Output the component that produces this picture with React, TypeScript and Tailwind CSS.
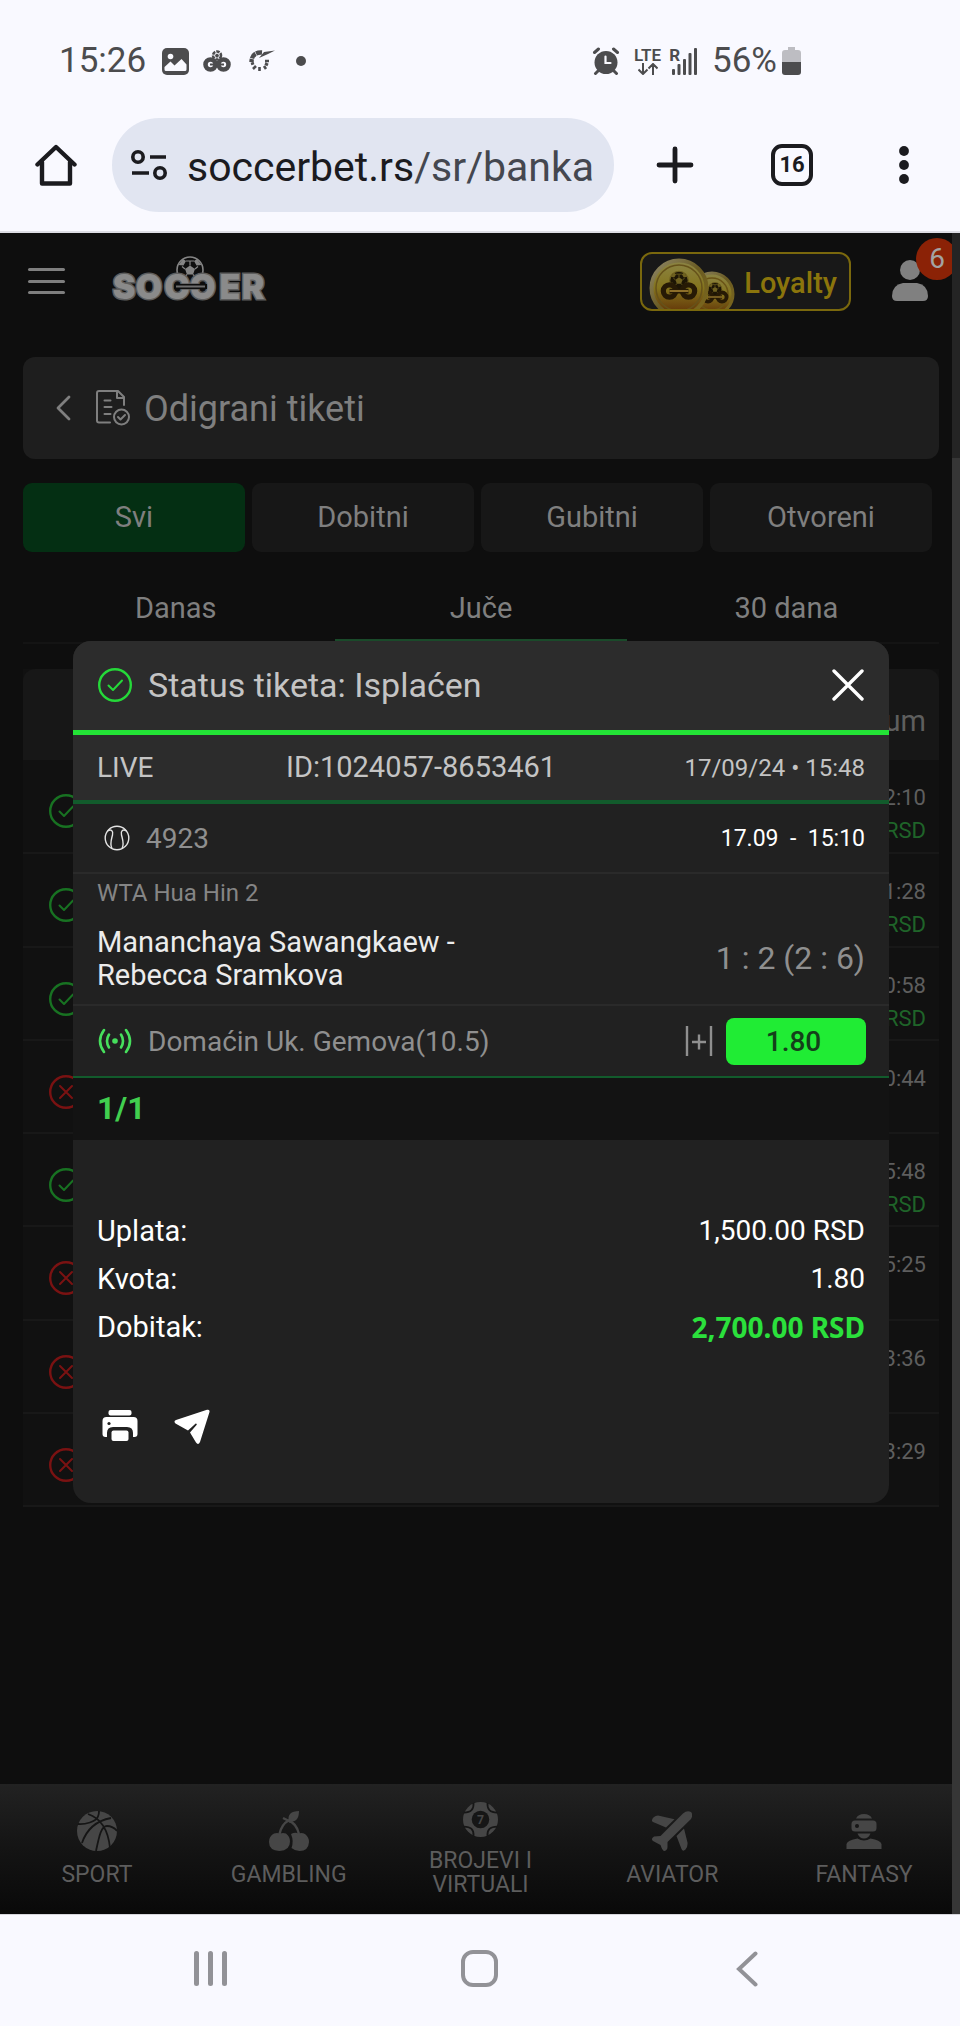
import { useState } from 'react'

type Ticket = { time: string; won: boolean }

const tickets: Ticket[] = [
  { time: '22:10', won: true },
  { time: '21:28', won: true },
  { time: '20:58', won: true },
  { time: '20:44', won: false },
  { time: '15:48', won: true },
  { time: '15:25', won: false },
  { time: '13:36', won: false },
  { time: '13:29', won: false },
]

const filters = ['Svi', 'Dobitni', 'Gubitni', 'Otvoreni']
const periods = ['Danas', 'Juče', '30 dana']

function CheckCircle({ className }: { className: string }) {
  return (
    <svg viewBox="0 0 34 34" className={className} fill="none" stroke="currentColor" strokeWidth="2.4" strokeLinecap="round" strokeLinejoin="round">
      <circle cx="17" cy="17" r="15.8" />
      <path d="M10.5 17.5l4.5 4.5 9-9.5" strokeWidth="2" />
    </svg>
  )
}

function CrossCircle({ className }: { className: string }) {
  return (
    <svg viewBox="0 0 34 34" className={className} fill="none" stroke="currentColor" strokeWidth="2.4" strokeLinecap="round">
      <circle cx="17" cy="17" r="15.8" />
      <path d="M11 11l12 12M23 11L11 23" strokeWidth="2" />
    </svg>
  )
}

// two rings with a ball on top, the brand sign
function BrandMark({ className }: { className?: string }) {
  return (
    <svg viewBox="0 0 28 22" className={className} fill="none" stroke="currentColor">
      <circle cx="7.5" cy="14.5" r="5" strokeWidth="4.6" />
      <circle cx="20.5" cy="14.5" r="5" strokeWidth="4.6" />
      <path d="M7 14.5h14" strokeWidth="2" />
      <circle cx="14" cy="5.5" r="4" strokeWidth="2.6" strokeDasharray="3.4 1" />
      <path d="M12 5l2-1.5L16 5l-.8 2.4h-2.4z" fill="currentColor" stroke="none" />
    </svg>
  )
}

function StatusBar() {
  return (
    <div className="flex h-[98px] items-center justify-between pl-[59px] pr-[159px] pt-6 text-[#4c4c4e]">
      <div className="flex items-center">
        <span className="text-[35px] leading-9">15:26</span>
        <svg viewBox="0 0 27 27" className="ml-4 h-[27px] w-[27px]">
          <rect width="27" height="27" rx="5" fill="currentColor" />
          <circle cx="8.5" cy="8.5" r="2.8" fill="#f9f9ff" />
          <path d="M2.5 19l6-5.5 4 4 7-6.5 5 5.5v5q0 1.5-1.5 1.5h-19q-1.5 0-1.5-1.5z" fill="#f9f9ff" />
        </svg>
        <BrandMark className="ml-[14px] h-[22px] w-7" />
        <svg viewBox="0 0 26 22" className="ml-[18px] h-[22px] w-[26px]" fill="none" stroke="currentColor">
          <path d="M13 2.5C6 2 2.500 6 2.500 12" strokeWidth="4.4" strokeDasharray="6 .6" />
          <path d="M10 8L15 2 26 .5 19 4z" fill="currentColor" stroke="none" />
          <path d="M2 14l3-1M4 19l3-3M10.500 21v-4M17 19l-2-3M20 11h-4M19 15l-3-1.5" strokeWidth="2.6" />
        </svg>
        <span className="ml-[21px] h-[10px] w-[10px] rounded-full bg-[#4c4c4e]" />
      </div>
      <div className="flex items-center">
        <svg viewBox="0 0 28 28" className="h-7 w-7" fill="none" stroke="currentColor" strokeLinecap="round">
          <circle cx="14" cy="15.5" r="11.5" fill="currentColor" stroke="none" />
          <path d="M2.5 5.5l4-3.500M25.500 5.500l-4-3.500M6 24l-2.500 2.500M22 24l2.500 2.500" strokeWidth="3" />
          <path d="M13.5 9.500v6.500h5" stroke="#f9f9ff" strokeWidth="2.2" />
        </svg>
        <div className="ml-[14px] flex flex-col items-center">
          <span className="text-[17px] leading-4 font-semibold">LTE</span>
          <svg viewBox="0 0 20 12" className="h-3 w-5" fill="none" stroke="currentColor" strokeWidth="2">
            <path d="M5 0v10.500M.5 6.500L5 11l4.500-4.500M15 12V1.500M10.500 5.500L15 1l4.500 4.500" />
          </svg>
        </div>
        <div className="ml-2 flex">
          <span className="-mr-2 text-[17px] leading-4 font-bold">R</span>
          <svg viewBox="0 0 25 28" className="h-7 w-[25px]" fill="currentColor">
            <rect x="0" y="22" width="3" height="6" rx="1" />
            <rect x="5.5" y="17" width="3" height="11" rx="1" />
            <rect x="11" y="12" width="3" height="16" rx="1" />
            <rect x="16.5" y="6" width="3" height="22" rx="1" />
            <rect x="22" y="1" width="3" height="27" rx="1" />
          </svg>
        </div>
        <span className="ml-[15px] text-[35px] leading-9">56%</span>
        <svg viewBox="0 0 19 28" className="ml-[5px] h-7 w-[19px]">
          <path d="M6 0h7v3h3q3 0 3 3v9H0V6q0-3 3-3h3z" fill="#bdbdc2" />
          <path d="M0 15h19v10q0 3-3 3H3q-3 0-3-3z" fill="currentColor" />
        </svg>
      </div>
    </div>
  )
}

function BrowserBar() {
  return (
    <div className="flex h-[135px] items-center border-b-2 border-[#dddde4] pl-[35px] pr-[51px] text-[#1b1b1f]">
      <button aria-label="Home">
        <svg viewBox="0 0 42 42" className="h-[42px] w-[42px]" fill="none" stroke="currentColor" strokeWidth="4.4" strokeLinecap="round" strokeLinejoin="round">
          <path d="M2.5 20.5L21 3l18.500 17.500" />
          <path d="M7 18v21.500h28V18" />
        </svg>
      </button>
      <div className="ml-[35px] flex h-[94px] flex-1 items-center rounded-full bg-[#e1e5f1] pl-[19px]">
        <svg viewBox="0 0 36 30" className="h-[30px] w-9" fill="none" stroke="currentColor" strokeWidth="3.6">
          <circle cx="7" cy="7" r="5.2" />
          <circle cx="29" cy="23" r="5.2" />
          <path d="M19 7h16M1 23h17" />
        </svg>
        <span className="ml-5 pt-1 text-[41px] leading-[48px] whitespace-nowrap">
          soccerbet.rs<span className="text-[#44474f]">/sr/banka</span>
        </span>
      </div>
      <button aria-label="New tab" className="ml-[42px]">
        <svg viewBox="0 0 38 38" className="h-[38px] w-[38px]" stroke="currentColor" strokeWidth="4.8" strokeLinecap="round">
          <path d="M19 3v32M3 19h32" />
        </svg>
      </button>
      <button className="ml-[77px] flex h-[42px] w-[42px] items-center justify-center rounded-[11px] border-4 border-[#1b1b1f] text-[22px] leading-6 font-bold">16</button>
      <button aria-label="Menu" className="ml-[86px]">
        <svg viewBox="0 0 10 38" className="h-[38px] w-[10px]" fill="currentColor">
          <circle cx="5" cy="5" r="4.9" />
          <circle cx="5" cy="19" r="4.9" />
          <circle cx="5" cy="33" r="4.9" />
        </svg>
      </button>
    </div>
  )
}

function Ball({ cx, cy, r, light, dark }: { cx: number; cy: number; r: number; light: string; dark: string }) {
  return (
    <g transform={`translate(${cx} ${cy}) scale(${r / 14})`}>
      <circle r="13" fill={dark} stroke={light} strokeWidth="1.6" />
      <path d="M-5-1L0-4.500l5 3.500L3 4.500h-6z" fill={light} />
      <path d="M-11.500-5l4.500-6 3 2-2.500 4.500zM11.500-5l-4.500-6-3 2 2.500 4.500z" fill={light} />
      <path d="M-5-1l-3-2.500M5-1l3-2.500M0-4.500v-4M-4-9h8M-3 4.500l-4 4M3 4.500l4 4" stroke={light} strokeWidth="1.2" />
      <path d="M-12.500 3l4 0 1.500 5.500-3 1zM12.500 3l-4 0-1.500 5.500 3 1z" fill={light} />
    </g>
  )
}

function Logo() {
  return (
    <svg viewBox="0 -3 158 56" className="h-14 w-[158px]" aria-label="Soccer">
      <Ball cx={79} cy={14} r={14} light="#858585" dark="#0e0e0e" />
      <g fontFamily="Inter, sans-serif" fontWeight="900" fontSize="34" fill="#8a8a8a" stroke="#5d5d5d" strokeWidth="3" style={{ paintOrder: 'stroke' }} textAnchor="middle">
        <text x="13" y="43">S</text>
        <text x="38" y="43">O</text>
        <text x="66" y="43">C</text>
        <text x="92" y="43">Ɔ</text>
        <text x="119" y="43">E</text>
        <text x="142" y="43">R</text>
      </g>
      <path d="M63 30.5h33" stroke="#0e0e0e" strokeWidth="5" />
      <path d="M65 30.5h29" stroke="#6d6d6d" strokeWidth="2" />
    </svg>
  )
}

function CoinSign({ x, y, s }: { x: number; y: number; s: number }) {
  return (
    <g transform={`translate(${x} ${y}) scale(${s})`} fill="none">
      <Ball cx={0} cy={-11} r={10.5} light="#6f6120" dark="#1d1505" />
      <circle cx="-10" cy="0" r="6.5" stroke="#271a05" strokeWidth="5.5" />
      <circle cx="10" cy="0" r="6.5" stroke="#271a05" strokeWidth="5.5" />
      <path d="M-10 0h20" stroke="#271a05" strokeWidth="5" />
      <path d="M-10 0h20" stroke="#8d6f2a" strokeWidth="2" />
    </g>
  )
}

function Coins() {
  return (
    <svg viewBox="0 0 86 51" className="h-[51px] w-[86px]">
      <defs>
        <linearGradient id="coin" x1="0" y1="0" x2="0" y2="1">
          <stop offset="0" stopColor="#8b8445" />
          <stop offset="0.5" stopColor="#84741d" />
          <stop offset="1" stopColor="#5f2e06" />
        </linearGradient>
        <linearGradient id="rim" x1="0" y1="0" x2="1" y2="1">
          <stop offset="0" stopColor="#8f8868" />
          <stop offset="0.5" stopColor="#6a5b22" />
          <stop offset="1" stopColor="#7d681c" />
        </linearGradient>
      </defs>
      <circle cx="63" cy="36" r="21" fill="url(#coin)" stroke="url(#rim)" strokeWidth="3" />
      <circle cx="63" cy="36" r="16" fill="none" stroke="#6a5416" strokeWidth="1.5" />
      <CoinSign x={66} y={39} s={0.7} />
      <circle cx="30" cy="30" r="27.5" fill="url(#coin)" stroke="url(#rim)" strokeWidth="4" />
      <circle cx="30" cy="30" r="23" fill="none" stroke="#66521a" strokeWidth="1.5" />
      <CoinSign x={30} y={33} s={0.95} />
    </svg>
  )
}

function SiteHeader() {
  return (
    <header className="flex h-24 items-center pl-7 pr-[31px]">
      <button aria-label="Meni" className="flex h-[26px] w-[37px] flex-col justify-between">
        <span className="h-[3px] w-full rounded bg-[#7f7f7f]" />
        <span className="h-[3px] w-full rounded bg-[#7f7f7f]" />
        <span className="h-[3px] w-full rounded bg-[#7f7f7f]" />
      </button>
      <a href="#" className="ml-[46px]">
        <Logo />
      </a>
      <button className="ml-auto flex h-[59px] w-[211px] items-end justify-between overflow-hidden rounded-xl border-2 border-[#7a680d] bg-[#181818] pl-[7px] pr-3">
        <Coins />
        <span className="self-center pt-1 text-[29px] leading-9 font-medium text-[#8b750c]">Loyalty</span>
      </button>
      <button aria-label="Profil, 6 poruka" className="relative ml-10">
        <svg viewBox="0 0 38 42" className="h-[42px] w-[38px]" fill="#808080">
          <circle cx="19" cy="10" r="10" />
          <path d="M12 23h14q11 2 11 13 0 5-5 5H6q-5 0-5-5 0-11 11-13z" />
        </svg>
        <span className="absolute -top-[22px] left-[25px] flex h-[42px] w-[42px] items-center justify-center rounded-full bg-[#8b2206] text-[28px] leading-8 text-[#a3a3a3]">6</span>
      </button>
    </header>
  )
}

function TicketRow({ ticket }: { ticket: Ticket }) {
  return (
    <tr className="h-[93px] border-b-2 border-[#181818] align-top">
      <td className="pl-[26px] pt-[34px]">
        {ticket.won
          ? <CheckCircle className="h-[34px] w-[34px] text-[#187222]" />
          : <CrossCircle className="h-[34px] w-[34px] text-[#7a1212]" />}
      </td>
      <td className="pr-[13px] pt-[21px] text-right text-[22px] leading-[33px] text-[#5e5e5e]">
        {ticket.time}
        {ticket.won && <div className="text-[#1f6429]">RSD</div>}
      </td>
    </tr>
  )
}

function TicketModal({ onClose }: { onClose: () => void }) {
  return (
    <div className="absolute inset-0 flex items-center pr-[71px] pb-[3px] pl-[73px]">
      <div role="dialog" aria-label="Status tiketa" className="flex-1 overflow-hidden rounded-[18px] bg-[#212121] text-[28px] leading-[33px] text-[#8f8f8f]">
        <div className="flex h-[94px] items-center border-b-[5px] border-[#23e336] bg-[#2c2c2c] px-[25px] pb-0.5 text-[#c4c4c4]">
          <CheckCircle className="h-[34px] w-[34px] text-[#25d939]" />
          <h2 className="ml-4 text-[34px] leading-10">Status tiketa: Isplaćen</h2>
          <button aria-label="Zatvori" onClick={onClose} className="ml-auto">
            <svg viewBox="0 0 32 32" className="h-8 w-8" stroke="#ffffff" strokeWidth="3.4" strokeLinecap="round">
              <path d="M2 2l28 28M30 2L2 30" />
            </svg>
          </button>
        </div>
        <div className="flex h-[69px] items-center justify-between border-b-4 border-[#125b2c] bg-[#2c2c2c] px-6 text-[#c4c4c4]">
          <span className="w-[189px]">LIVE</span>
          <span className="text-[29px]">ID:1024057-8653461</span>
          <span className="ml-auto text-2xl">17/09/24 • 15:48</span>
        </div>
        <div className="flex h-[70px] items-center border-b-2 border-[#2a2a2a] px-6">
          <svg viewBox="0 0 26 26" className="ml-[7px] h-[26px] w-[26px]" fill="none" stroke="#e4e4e4" strokeWidth="1.4">
            <circle cx="13" cy="13" r="11.8" />
            <path d="M3.5 6C7 3.500 9.500 6 8.500 10S5.500 19 8 23.500M22.500 6C19 3.500 16.500 6 17.500 10S20.500 19 18 23.500" />
          </svg>
          <span className="ml-4">4923</span>
          <span className="ml-auto text-[23px] whitespace-pre text-white">17.09  -  15:10</span>
        </div>
        <div className="flex h-[132px] items-end justify-between border-b-2 border-[#2a2a2a] px-6 pb-[12px]">
          <div>
            <div className="mb-4 text-2xl leading-[33px] text-[#858585]">WTA Hua Hin 2</div>
            <div className="text-[29px] leading-[33px] text-[#ececec]">
              Mananchaya Sawangkaew -<br />Rebecca Sramkova
            </div>
          </div>
          <span className="mb-[14px] text-[32px] leading-10">1 : 2 (2 : 6)</span>
        </div>
        <div className="flex h-[72px] items-center border-b-2 border-[#125b2c] pl-[25px] pr-[23px]">
          <svg viewBox="0 0 34 26" className="h-[26px] w-[34px]" fill="none" stroke="#46df5c" strokeWidth="2.6" strokeLinecap="round">
            <circle cx="17" cy="13" r="2.8" fill="#46df5c" stroke="none" />
            <path d="M11 6.500q-4 6.500 0 13M23 6.500q4 6.500 0 13M6 2q-8 11 0 22M28 2q8 11 0 22" />
          </svg>
          <span className="ml-4">Domaćin Uk. Gemova(10.5)</span>
          <button aria-label="Detalji" className="ml-auto">
            <svg viewBox="0 0 28 32" className="h-8 w-7" stroke="#8f8f8f" strokeWidth="2.4">
              <path d="M2 1v30M26 1v30M7 17h14M14 9.500v15" />
            </svg>
          </button>
          <span className="ml-[13px] flex h-[47px] w-[140px] items-center justify-center rounded-lg bg-[#20ec34] pr-[5px] font-medium text-[#14401a]">1.80</span>
        </div>
        <div className="flex h-[62px] items-center bg-[#131313] px-6 pb-0.5 text-[32px] font-bold text-[#41cf4f]">1/1</div>
        <div className="px-6 pt-[67px] pb-[58px] text-white">
          <dl className="grid grid-cols-2 leading-[48px]">
            <dt className="text-[29px]">Uplata:</dt>
            <dd className="text-right">1,500.00 RSD</dd>
            <dt className="text-[29px]">Kvota:</dt>
            <dd className="text-right">1.80</dd>
            <dt className="text-[29px]">Dobitak:</dt>
            <dd className="text-right font-['Noto_Sans',sans-serif] font-bold text-[#2be03c]">2,700.00 RSD</dd>
          </dl>
          <div className="mt-[58px] flex gap-9 pl-[5px]">
            <button aria-label="Štampaj">
              <svg viewBox="0 0 36 36" className="h-9 w-9" fill="#ffffff">
                <rect x="6.5" y="1" width="23" height="5.5" rx="2" />
                <path d="M4.5 8h27q4 0 4 4v13q0 3-3 3h-1.500v-4q0-6-6-6H11q-6 0-6 6v4H3.500q-3 0-3-3V12q0-4 4-4z" />
                <rect x="9.5" y="21.5" width="17" height="10.5" rx="2" />
                <circle cx="7" cy="14.5" r="1.6" fill="#212121" />
              </svg>
            </button>
            <button aria-label="Pošalji">
              <svg viewBox="0 0 36 36" className="h-9 w-9" fill="#ffffff">
                <path d="M33 .8q3-.8 2.500 2.200L26 33q-1.800 3.500-4 .5l-6-10 6.500-7.500q.8-1.500-.8-1.600L14 21.500 1.500 14.500Q-.8 12.500 2 11z" />
              </svg>
            </button>
          </div>
        </div>
      </div>
    </div>
  )
}

const navItems = [
  {
    label: 'SPORT',
    size: 'h-10 w-10',
    icon: (
      <>
        <circle cx="20" cy="20" r="20" />
        <path d="M1 13C8 13.500 19 11 21 5.500 22 3 22 1 22 0M11 3c12 4 20 14 22 34M5 32C9 20 18 10 34 7M19 40c3-14 5-25 11-25q6 0 10 5" fill="none" stroke="#151515" strokeWidth="1.8" />
      </>
    ),
  },
  {
    label: 'GAMBLING',
    size: 'h-10 w-10',
    icon: (
      <>
        <path d="M10.5 23C12 16 15 12 19.500 9.500 24 11 28 15 30 23" fill="none" stroke="#464646" strokeWidth="2.4" />
        <path d="M14 7l8 4" stroke="#464646" strokeWidth="2.4" />
        <path d="M20 10C18 4 22 0 30 0c0 7-3 12-10 10z" />
        <path d="M5 22.500q3-1 6 0 3-1 6 0 4 3 4 8 0 9-10.500 9.500Q0 39.500 0 31q0-6 5-8.500z" />
        <path d="M22 23q4-2 7.500-.500Q33 21.500 36 23q4 3 4 8-.5 9-9.500 9-4.500 0-8-3 2.500-7-.5-14z" />
      </>
    ),
  },
  {
    label: 'BROJEVI I VIRTUALI',
    size: 'h-[35px] w-[35px]',
    icon: (
      <>
        <circle cx="20" cy="20" r="20" />
        <g fill="none" stroke="#161616" strokeWidth="2">
          <path d="M12 1q1 11-11 11M28 1q-1 11 11 11M12 39q1-11-11-11M28 39q-1-11 11-11" />
        </g>
        <circle cx="20" cy="20" r="10" fill="#161616" />
        <text x="20" y="25" textAnchor="middle" fontSize="14" fontWeight="700">7</text>
      </>
    ),
  },
  {
    label: 'AVIATOR',
    size: 'h-10 w-10',
    icon: (
      <>
        <path d="M39 1q2.500 3 0 7L15.500 31v5q0 3-3 4-2 0-4-6L1 30q-2.500-2 1-4.500l6.500-.5L31 2.500q4-3.500 8-1.500z" />
        <path d="M0 9q1-4 6-4.500l16.500 3.800-8.500 8.200L1 11Q-.5 10 0 9zM32 17.500L24.500 25l5 13q1.500 3 4 .5 2.500-3 2-7z" />
      </>
    ),
  },
  {
    label: 'FANTASY',
    size: 'h-10 w-10',
    icon: (
      <>
        <path d="M12 7.500Q14 3 20 3t8 4.500z" />
        <path d="M11 9.500h18q3.500 0 3.500 3.500v4q0 3.500-3.500 3.500H11q-3.500 0-3.500-3.500v-4q0-3.500 3.500-3.500z" />
        <circle cx="13" cy="15" r="2" fill="#161616" />
        <path d="M13.5 22.500h13q-2 5-6.500 5t-6.500-5z" />
        <path d="M2.5 38v-5q1-4 11-5.500 6.500 4 13 0 10 1.500 11 5.500v5z" />
      </>
    ),
  },
]

function BottomNav() {
  return (
    <nav className="mt-auto grid h-[130px] grid-cols-5 bg-linear-to-b from-[#222222] via-[#141414] to-[#090909] pl-px">
      {navItems.map((item) => (
        <a key={item.label} href="#" className="flex flex-col items-center justify-center gap-3 text-center text-[23px] leading-6 text-[#5d5d5d]">
          <svg viewBox="0 0 40 40" className={item.size} fill="#464646">{item.icon}</svg>
          <span className="max-w-[120px]">{item.label}</span>
        </a>
      ))}
    </nav>
  )
}

function SystemNav() {
  return (
    <div className="grid h-28 grid-cols-[420fr_118fr_418fr_4fr] items-center border-t border-[#d5d5db] pb-1 text-[#929297]">
      <button aria-label="Recent apps" className="flex justify-center gap-[9px]">
        <span className="h-[35px] w-[5px] rounded-full bg-[#929297]" />
        <span className="h-[35px] w-[5px] rounded-full bg-[#929297]" />
        <span className="h-[35px] w-[5px] rounded-full bg-[#929297]" />
      </button>
      <button aria-label="Home screen" className="h-[37px] w-[37px] justify-self-center rounded-xl border-4 border-[#929297]" />
      <button aria-label="Back" className="flex justify-center">
        <svg viewBox="0 0 22 36" className="h-9 w-[22px]" fill="none" stroke="currentColor" strokeWidth="4" strokeLinecap="round">
          <path d="M19.5 2.500L3 18l16.500 15.500" />
        </svg>
      </button>
    </div>
  )
}

export default function App() {
  const [filter, setFilter] = useState('Svi')
  const [period, setPeriod] = useState('Juče')
  const [open, setOpen] = useState(true)

  return (
    <div className="flex min-h-screen flex-col bg-[#f9f9ff] font-[Roboto,sans-serif]">
      <StatusBar />
      <BrowserBar />

      <main className="relative flex flex-1 flex-col bg-[#0e0e0e]">
        <SiteHeader />

        <div className="pl-[23px] pr-[21px]">
          <div className="mt-7 flex h-[102px] items-center rounded-xl bg-[#1e1e1e] pl-8 text-[#7f7f7f]">
            <button aria-label="Nazad">
              <svg viewBox="0 0 16 26" className="h-[26px] w-4" fill="none" stroke="currentColor" strokeWidth="2.8" strokeLinecap="round" strokeLinejoin="round">
                <path d="M14 2L3 13l11 11" />
              </svg>
            </button>
            <svg viewBox="0 0 34 36" className="ml-[25px] h-9 w-[34px]" fill="none" stroke="currentColor" strokeWidth="2" strokeLinecap="round" strokeLinejoin="round">
              <path d="M14 32.500H3q-2 0-2-2V3q0-2 2-2h19l6 6v8M21 1v7h7" />
              <path d="M8.500 10.500h6M8.500 17h7M8.500 24h6" />
              <circle cx="25.5" cy="27" r="7.5" />
              <path d="M22 27l2.500 2.500 4.500-4.500" />
            </svg>
            <h1 className="ml-[14px] pt-0.5 text-4xl leading-10">Odigrani tiketi</h1>
          </div>

          <div className="mt-6 grid grid-cols-4 gap-[7px] pr-[7px]">
            {filters.map((name) => (
              <button
                key={name}
                onClick={() => setFilter(name)}
                className={`h-[69px] rounded-[9px] pb-0.5 text-[29px] leading-8 text-[#7f7f7f] ${filter === name ? 'bg-[#042f13]' : 'bg-[#171717]'}`}
              >
                {name}
              </button>
            ))}
          </div>

          <div className="mt-[18px] grid grid-cols-3 border-b-2 border-[#141414]">
            {periods.map((name) => (
              <button
                key={name}
                onClick={() => setPeriod(name)}
                className={`mx-[7px] h-[72px] border-b-[3px] pt-1.5 text-[29px] leading-8 text-[#7f7f7f] ${period === name ? 'border-[#1a4a2a]' : 'border-transparent'}`}
              >
                {name}
              </button>
            ))}
          </div>

          <table className="mt-[25px] h-[838px] w-full border-collapse bg-[#111111]">
            <thead>
              <tr className="h-[91px] bg-[#171717]">
                <th className="rounded-tl-xl" />
                <th className="rounded-tr-xl pr-[13px] pt-3 text-right text-[29px] leading-8 font-normal text-[#5e5e5e]">Datum</th>
              </tr>
            </thead>
            <tbody>
              {tickets.map((ticket) => (
                <TicketRow key={ticket.time} ticket={ticket} />
              ))}
            </tbody>
          </table>
        </div>

        <BottomNav />

        {/* page scrollbar */}
        <div className="absolute inset-y-0 right-0 w-2 bg-[#363636]">
          <div className="h-[225px] bg-[#242424]" />
        </div>

        {open && <TicketModal onClose={() => setOpen(false)} />}
      </main>

      <SystemNav />
    </div>
  )
}
